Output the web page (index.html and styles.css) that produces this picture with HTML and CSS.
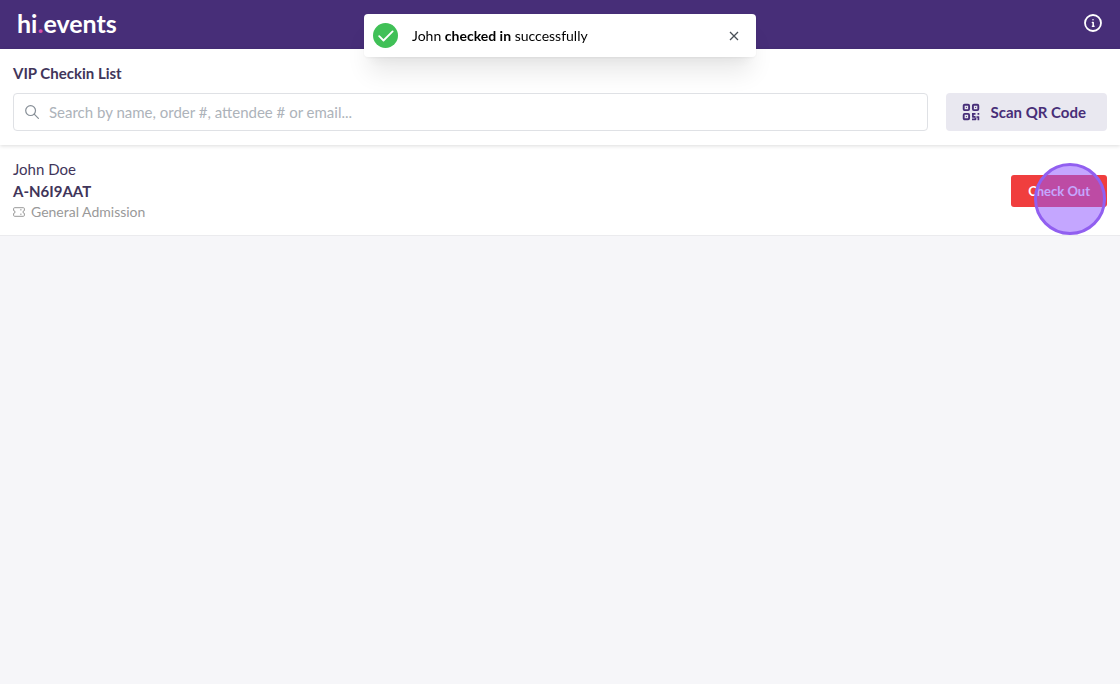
FILE: index.html
```
<!DOCTYPE html>
<html lang="en">
<head>
<meta charset="UTF-8">
<meta name="viewport" content="width=device-width, initial-scale=1">
<title>VIP Checkin List</title>
<link rel="stylesheet" href="styles.css">
</head>
<body>

<header class="header">
    <a class="logo" href="#">hi<span class="logo-dot">.</span>events</a>
    <button class="info-button" type="button" aria-label="Info">
        <svg width="20" height="20" viewBox="0 0 20 20" fill="none" stroke="currentColor" stroke-width="1.8" stroke-linecap="round" stroke-linejoin="round">
            <circle cx="10" cy="10" r="8"/>
            <path d="M10 6.8h.01M9.4 9.4h.8v3.8M9.4 13.2h1.6" stroke-width="1.5"/>
        </svg>
    </button>
</header>

<section class="toolbar">
    <h1 class="title">VIP Checkin List</h1>
    <div class="search-row">
        <div class="search">
            <svg class="search-icon" width="14" height="14" viewBox="0 0 14 14" fill="none" stroke="currentColor" stroke-width="1.2" stroke-linecap="round">
                <circle cx="5.6" cy="5.6" r="4.9"/>
                <path d="M9.2 9.2l4.2 4.2"/>
            </svg>
            <input class="search-input" type="text" aria-label="Search attendees" placeholder="Search by name, order #, attendee # or email...">
        </div>
        <button class="scan-button" type="button">
            <svg width="18" height="18" viewBox="0 0 18 18" fill="none" stroke="currentColor" stroke-width="1.9" stroke-linejoin="round">
                <rect x="1.700" y="1.700" width="5.400" height="5.400" rx="1"/>
                <rect x="10.900" y="1.700" width="5.400" height="5.400" rx="1"/>
                <rect x="1.700" y="10.900" width="5.400" height="5.400" rx="1"/>
                <path d="M3.900 4.400h1M13.100 4.400h1M3.900 13.600h1" stroke-width="1"/>
                <path d="M10 10.900h3.500M10.900 11v2.900h2.600M10 16.300h3.500v-1.600M16.400 10v1.700M14.500 14h2.700M16.400 14v3.200" stroke-width="1.700"/>
            </svg>
            Scan QR Code
        </button>
    </div>
</section>

<main class="attendees">
    <div class="attendee">
        <div class="details">
            <div class="name">John Doe</div>
            <div class="code">A-N6I9AAT</div>
            <div class="product">
                <svg width="12" height="10" viewBox="0 0 12 10" fill="none" stroke="currentColor" stroke-linejoin="round">
                    <path d="M1.600 .7h8.800a1 1 0 0 1 1 1v1.900a1.400 1.400 0 0 0 0 2.800v1.900a1 1 0 0 1-1 1h-8.800a1 1 0 0 1-1-1v-1.900a1.400 1.400 0 0 0 0-2.800v-1.900a1 1 0 0 1 1-1z"/>
                    <path d="M7.900 2v1.500M7.900 6.500v1.500"/>
                </svg>
                General Admission
            </div>
        </div>
        <div class="action">
            <button class="checkout-button" type="button">Check Out</button>
            <span class="click-marker"></span>
        </div>
    </div>
</main>

<div class="toast" role="alert">
    <span class="toast-icon">
        <svg width="16" height="12" viewBox="0 0 16 12" fill="none" stroke="currentColor" stroke-width="1.8" stroke-linecap="round" stroke-linejoin="round">
            <path d="M1.200 6.200l4.300 4.300L14.600 1.400"/>
        </svg>
    </span>
    <div class="toast-text">John <b>checked in</b> successfully</div>
    <button class="toast-close" type="button" aria-label="Close">
        <svg width="10" height="10" viewBox="0 0 10 10" fill="none" stroke="currentColor" stroke-width="1.3">
            <path d="M1 1l8 8M9 1l-8 8"/>
        </svg>
    </button>
</div>

</body>
</html>
```

FILE: styles.css
```
* {
    box-sizing: border-box;
}

body {
    margin: 0;
    background: #f6f6f9;
    color: #41355a;
    font-family: Lato, sans-serif;
    font-size: 15px;
    line-height: 20px;
}

button {
    border: none;
    padding: 0;
    font-family: inherit;
    cursor: pointer;
}

svg {
    display: block;
    flex-shrink: 0;
}

.header {
    display: flex;
    align-items: center;
    justify-content: space-between;
    height: 49px;
    padding: 0 17px 4px;
    background: #472e78;
    color: #fff;
}

.logo {
    color: #fff;
    font-size: 25px;
    font-weight: 700;
    line-height: 28px;
    text-decoration: none;
}

.logo-dot {
    color: #d14fae;
}

.info-button {
    background: none;
    color: #fff;
}

.toolbar {
    position: relative;
    padding: 14px 13px;
    background: #fff;
    box-shadow: 0 1px 4px rgba(0, 0, 0, 0.14);
}

.title {
    margin: 0 0 10px;
    font-size: 15px;
    font-weight: 700;
    line-height: 20px;
}

.search-row {
    display: flex;
    gap: 18px;
}

.search {
    display: flex;
    flex: 1;
    align-items: center;
    height: 38px;
    padding: 0 11px;
    border: 1px solid #dfe1e5;
    border-radius: 4px;
    background: #fff;
}

.search-icon {
    color: #868e96;
}

.search-input {
    flex: 1;
    min-width: 0;
    padding: 0 0 0 10px;
    border: none;
    outline: none;
    background: none;
    font-family: inherit;
    font-size: 15px;
}

.search-input::placeholder {
    color: #adb3ba;
    opacity: 1;
}

.scan-button {
    display: flex;
    align-items: center;
    gap: 11px;
    height: 38px;
    padding: 0 21px 0 16px;
    border-radius: 4px;
    background: #e9e8f0;
    color: #472e78;
    font-size: 15px;
    font-weight: 700;
}

.attendee {
    display: flex;
    align-items: center;
    justify-content: space-between;
    padding: 14px 13px 13px;
    border-bottom: 1px solid #ebebee;
    background: #fff;
}

.code {
    margin: 2px 0 1px;
    font-weight: 700;
}

.product {
    display: flex;
    align-items: center;
    gap: 6px;
    color: #999;
    font-size: 14px;
}

.action {
    position: relative;
}

.checkout-button {
    height: 32px;
    padding: 0 17px;
    border-radius: 3px;
    background: #f03e3e;
    color: #fff;
    font-size: 13px;
    font-weight: 700;
}

.click-marker {
    position: absolute;
    right: 1px;
    bottom: -28px;
    width: 72px;
    height: 72px;
    border: 3px solid #915ff0;
    border-radius: 50%;
    background: rgba(143, 87, 255, 0.53);
    pointer-events: none;
}

.toast {
    position: fixed;
    top: 14px;
    left: 50%;
    display: flex;
    align-items: center;
    width: 392px;
    height: 43px;
    padding: 0 17px 0 9px;
    border-radius: 4px;
    background: #fff;
    box-shadow: 0 1px 3px rgba(0, 0, 0, 0.05), 0 20px 25px -5px rgba(0, 0, 0, 0.09), 0 10px 10px -5px rgba(0, 0, 0, 0.04);
    color: #000;
    font-size: 14px;
    transform: translateX(-50%);
}

.toast-icon {
    display: flex;
    align-items: center;
    justify-content: center;
    width: 25px;
    height: 25px;
    border-radius: 50%;
    background: #40c057;
    color: #fff;
}

.toast-text {
    flex: 1;
    margin-left: 14px;
}

.toast-close {
    background: none;
    color: #495057;
}
```
